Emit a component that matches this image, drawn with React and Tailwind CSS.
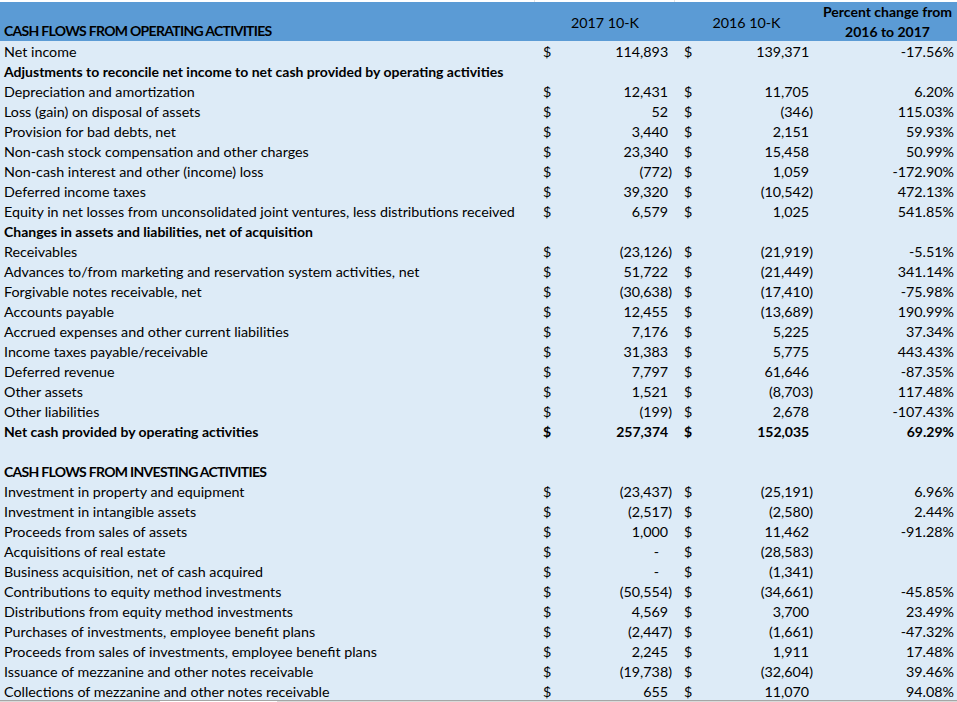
import React from "react";

// rows of the cash flow sheet: [label, 2017, 2016, pct, kind]
const rows = [
  ["Net income", "114,893", "139,371", "-17.56%"],
  ["Adjustments to reconcile net income to net cash provided by operating activities", null, null, null, "bold"],
  ["Depreciation and amortization", "12,431", "11,705", "6.20%"],
  ["Loss (gain) on disposal of assets", "52", "(346)", "115.03%"],
  ["Provision for bad debts, net", "3,440", "2,151", "59.93%"],
  ["Non-cash stock compensation and other charges", "23,340", "15,458", "50.99%"],
  ["Non-cash interest and other (income) loss", "(772)", "1,059", "-172.90%"],
  ["Deferred income taxes", "39,320", "(10,542)", "472.13%"],
  ["Equity in net losses from unconsolidated joint ventures, less distributions received", "6,579", "1,025", "541.85%"],
  ["Changes in assets and liabilities, net of acquisition", null, null, null, "bold"],
  ["Receivables", "(23,126)", "(21,919)", "-5.51%"],
  ["Advances to/from marketing and reservation system activities, net", "51,722", "(21,449)", "341.14%"],
  ["Forgivable notes receivable, net", "(30,638)", "(17,410)", "-75.98%"],
  ["Accounts payable", "12,455", "(13,689)", "190.99%"],
  ["Accrued expenses and other current liabilities", "7,176", "5,225", "37.34%"],
  ["Income taxes payable/receivable", "31,383", "5,775", "443.43%"],
  ["Deferred revenue", "7,797", "61,646", "-87.35%"],
  ["Other assets", "1,521", "(8,703)", "117.48%"],
  ["Other liabilities", "(199)", "2,678", "-107.43%"],
  ["Net cash provided by operating activities", "257,374", "152,035", "69.29%", "total"],
  ["", null, null, null],
  ["CASH FLOWS FROM INVESTING ACTIVITIES", null, null, null, "caps"],
  ["Investment in property and equipment", "(23,437)", "(25,191)", "6.96%"],
  ["Investment in intangible assets", "(2,517)", "(2,580)", "2.44%"],
  ["Proceeds from sales of assets", "1,000", "11,462", "-91.28%"],
  ["Acquisitions of real estate", "-", "(28,583)", ""],
  ["Business acquisition, net of cash acquired", "-", "(1,341)", ""],
  ["Contributions to equity method investments", "(50,554)", "(34,661)", "-45.85%"],
  ["Distributions from equity method investments", "4,569", "3,700", "23.49%"],
  ["Purchases of investments, employee benefit plans", "(2,447)", "(1,661)", "-47.32%"],
  ["Proceeds from sales of investments, employee benefit plans", "2,245", "1,911", "17.48%"],
  ["Issuance of mezzanine and other notes receivable", "(19,738)", "(32,604)", "39.46%"],
  ["Collections of mezzanine and other notes receivable", "655", "11,070", "94.08%"],
];

const Money = ({ value, first }) => {
  if (value === null) return <div />;
  const paren = value.endsWith(")");
  const dash = value === "-";
  return (
    <div className={`flex justify-between ${first ? "pl-[8px] pr-[3px]" : "pl-[9px] pr-[5px]"}`}>
      <span>$</span>
      <span className={dash ? "pr-[13px]" : ""}>
        {value}
        {!paren && !dash && <span className="invisible">)</span>}
      </span>
    </div>
  );
};

const Row = ({ row, last }) => {
  const [label, a, b, pct, kind] = row;
  const bold = kind === "bold" || kind === "total" || kind === "caps";
  return (
    <div
      className={`grid grid-cols-[535px_140px_143px_139px] ${last ? "h-[19px]" : "h-[20px]"} leading-[22px] whitespace-nowrap ${
        bold ? "font-bold text-[14px]" : "text-[14.3px]"
      }`}
    >
      <div className={`pl-[4px] ${kind === "caps" ? "tracking-[-0.7px]" : ""}`}>{label}</div>
      <Money value={a} first />
      <Money value={b} />
      <div className="text-right pr-[3px]">{pct}</div>
    </div>
  );
};

export default function App() {
  return (
    <div
      className="w-[957px] h-[702px] overflow-hidden bg-white text-[14px] text-black"
      style={{ fontFamily: "Lato, 'Open Sans', sans-serif" }}
    >
      {/* faint grid lines above the header */}
      <div className="h-[2px] grid grid-cols-[535px_140px_143px_139px]">
        <div className="border-r border-[#e3e3e3]" />
        <div className="border-r border-[#e3e3e3]" />
        <div />
        <div />
      </div>
      <div className="h-[39px] bg-[#5b9bd5] grid grid-cols-[535px_140px_143px_139px] leading-[20px]">
        <div className="pl-[4px] font-bold tracking-[-0.7px] flex items-end leading-[22px]">CASH FLOWS FROM OPERATING ACTIVITIES</div>
        <div className="flex items-center justify-center text-[14.3px] pt-[1px]">2017 10-K</div>
        <div className="flex items-center justify-center text-[14.3px] pt-[1px]">2016 10-K</div>
        <div className="font-bold text-center">
          <div>Percent change from</div>
          <div>2016 to 2017</div>
        </div>
      </div>
      <div className="bg-[#ddebf7]">
        {rows.map((r, i) => (
          <Row key={i} row={r} last={i === rows.length - 1} />
        ))}
      </div>
      <div className="h-[1px] bg-[#a6a6a6]" />
      <div className="h-[1px] flex">
        <div className="w-[160px] bg-[#d9d9d9]" />
        <div className="w-[117px] bg-white" />
        <div className="flex-1 bg-[#d9d9d9]" />
      </div>
    </div>
  );
}
